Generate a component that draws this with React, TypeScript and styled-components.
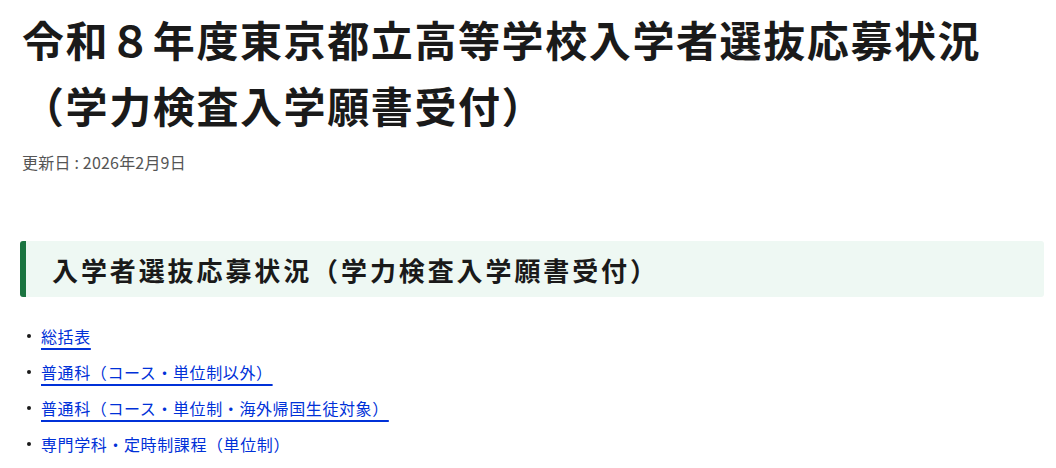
import React from 'react';
import styled, { createGlobalStyle } from 'styled-components';

const GlobalStyle = createGlobalStyle`
  html, body {
    margin: 0;
    padding: 0;
    background: #fff;
    font-family: "Noto Sans CJK JP", "Noto Sans", sans-serif;
    color: #1a1a1a;
  }
`;

const Page = styled.main`
  padding: 6px 12px 0 20px;
  width: 1056px;
  box-sizing: border-box;
`;

const Title = styled.h1`
  margin: 0;
  padding-left: 2px;
  font-size: 42px;
  line-height: 66px;
  font-weight: 700;
  letter-spacing: 1.6px;
  color: #1a1a1a;
`;

const Updated = styled.p`
  margin: 12px 0 0 2px;
  font-size: 16px;
  line-height: 24px;
  letter-spacing: 0.2px;
  color: #555;
`;

const SectionHeading = styled.h2`
  margin: 67px 0 0;
  height: 56px;
  display: flex;
  align-items: center;
  padding-left: 26px;
  border-left: 6px solid #1a7440;
  border-radius: 3px;
  background: #eef8f3;
  font-size: 26px;
  font-weight: 700;
  letter-spacing: 2.9px;
  color: #1a1a1a;
`;

const LinkList = styled.ul`
  list-style: none;
  margin: 27px 0 0;
  padding: 0;
  display: flex;
  flex-direction: column;
  gap: 12px;
`;

const Item = styled.li`
  display: flex;
  align-items: center;
  gap: 10px;
  padding-left: 7px;
  font-size: 16px;
  line-height: 24px;

  &::before {
    content: '';
    width: 4px;
    height: 4px;
    border-radius: 50%;
    background: #1a1a1a;
  }
`;

const Link = styled.a`
  color: #0031d8;
  letter-spacing: 0.6px;
  text-decoration: underline;
  text-decoration-thickness: 1.5px;
  text-underline-offset: 5px;
`;

const links = [
  '総括表',
  '普通科（コース・単位制以外）',
  '普通科（コース・単位制・海外帰国生徒対象）',
  '専門学科・定時制課程（単位制）',
];

export default function App() {
  return (
    <>
      <GlobalStyle />
      <Page>
        <Title>令和８年度東京都立高等学校入学者選抜応募状況（学力検査入学願書受付）</Title>
        <Updated>更新日 : 2026年2月9日</Updated>
        <SectionHeading>入学者選抜応募状況（学力検査入学願書受付）</SectionHeading>
        <LinkList>
          {links.map((label) => (
            <Item key={label}>
              <Link href="#">{label}</Link>
            </Item>
          ))}
        </LinkList>
      </Page>
    </>
  );
}
